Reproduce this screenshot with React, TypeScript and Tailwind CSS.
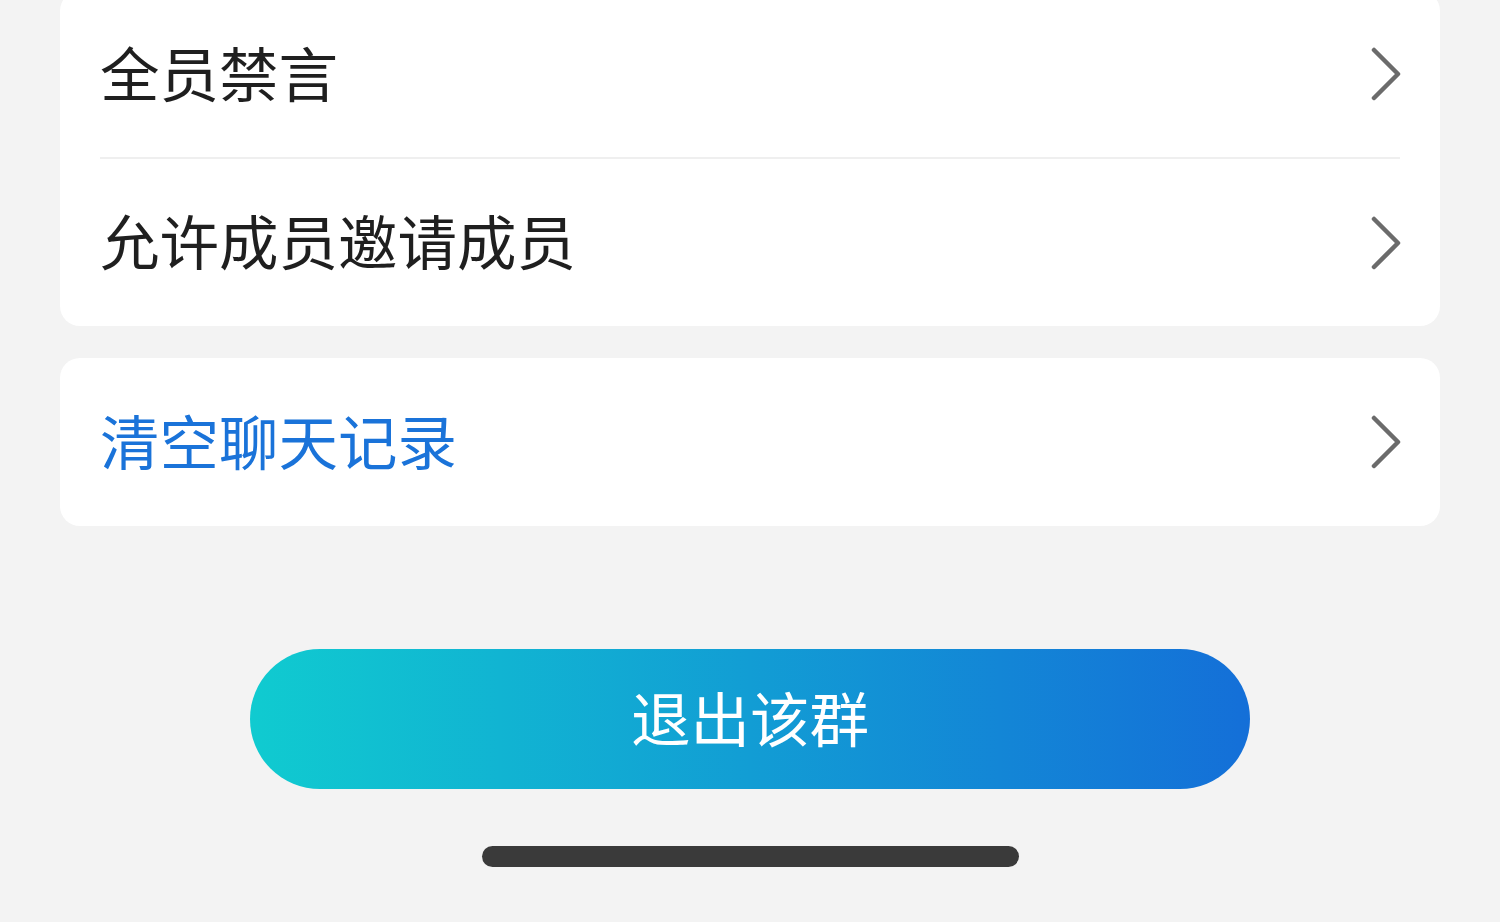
import React from "react";

const font = { fontFamily: '"Noto Sans CJK SC", "Noto Sans", sans-serif' };

function Chevron() {
  return (
    <svg width="32" height="54" viewBox="0 0 32 54" fill="none" className="shrink-0">
      <path d="M4 3 L28 27 L4 51" stroke="#6b6b6b" strokeWidth="4.5" strokeLinecap="round" strokeLinejoin="round" />
    </svg>
  );
}

function Row({ label, blue, height }: { label: string; blue?: boolean; height: string }) {
  return (
    <div className={`flex items-center justify-between pl-[40px] pr-[38px] ${height}`}>
      <span className={`pb-[5px] text-[59.5px] leading-none ${blue ? "text-[#1a73d9]" : "text-[#1f1f1f]"}`}>{label}</span>
      <Chevron />
    </div>
  );
}

export default function App() {
  return (
    <div className="h-[922px] w-full overflow-hidden bg-[#f3f3f3] px-[60px]" style={font}>
      <div className="-mt-[9px] rounded-[20px] bg-white">
        <Row label="全员禁言" height="h-[166px]" />
        <div className="mx-[40px] h-[2px] bg-[#efefef]" />
        <Row label="允许成员邀请成员" height="h-[167px]" />
      </div>
      <div className="mt-[32px] rounded-[20px] bg-white">
        <Row label="清空聊天记录" blue height="h-[168px]" />
      </div>
      <div className="mt-[123px] flex justify-center">
        <button className="flex h-[140px] w-[1000px] items-center justify-center rounded-full bg-linear-to-r/srgb from-[#10cbd0] to-[#146fd8] pb-[4px] text-[59.5px] leading-none text-white">
          退出该群
        </button>
      </div>
      <div className="mt-[57px] flex justify-center">
        <div className="h-[21px] w-[537px] rounded-full bg-[#3a3a3a]" />
      </div>
    </div>
  );
}
